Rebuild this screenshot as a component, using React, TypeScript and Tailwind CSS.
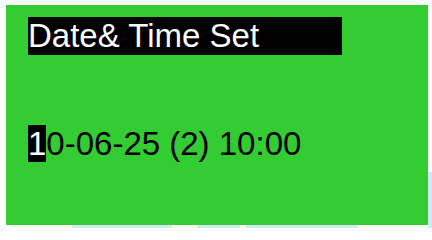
export default function App() {
  return (
    <div className="relative h-[228px] w-[432px] overflow-hidden bg-white font-['Liberation_Sans',Arial,sans-serif]">
      <div className="absolute bottom-0 right-0 h-[56px] w-[4px] bg-[#d3e7fb]" />
      <div className="absolute bottom-0 left-0 flex h-[3px] w-full gap-[6px] pl-[72px]">
        <div className="w-[100px] bg-[#d3e7fb]" />
        <div className="ml-[19px] w-[43px] bg-[#d3e7fb]" />
        <div className="w-[112px] bg-[#d3e7fb]" />
      </div>
      <div className="relative ml-[6px] mt-[5px] flex h-[220px] w-[422px] flex-col bg-[#33cc33] pl-[22px] pt-[12px]">
        <div className="h-[38px] w-[314px] bg-black text-[33px] leading-[38px] text-white">
          Date&amp; Time Set
        </div>
        <div className="mt-[70px] whitespace-pre text-[33px] leading-[38px] text-black">
          <span className="bg-black text-white">1</span>0-06-25 (2) 10:00
        </div>
      </div>
    </div>
  );
}
